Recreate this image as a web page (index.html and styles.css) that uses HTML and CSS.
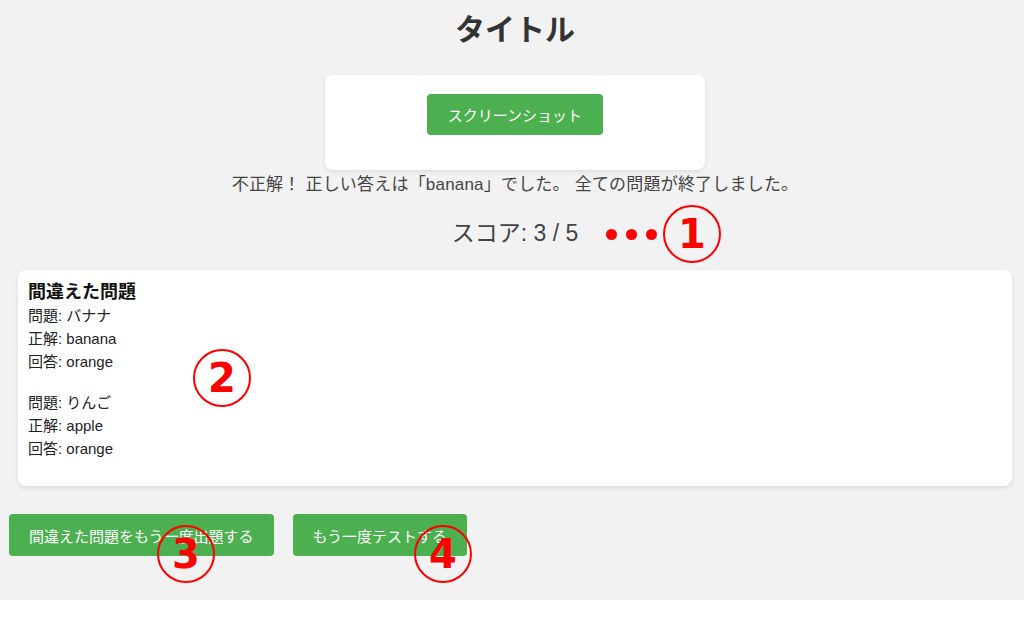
FILE: index.html
```html
<!DOCTYPE html>
<html lang="ja">
<head>
    <meta charset="UTF-8">
    <meta name="viewport" content="width=device-width, initial-scale=1.0">
    <title>タイトル</title>
    <link rel="stylesheet" href="styles.css">
</head>
<body>
    <div class="page">
        <div class="top">
            <h1 class="title">タイトル</h1>

            <div class="shot-card">
                <button class="btn">スクリーンショット</button>
            </div>

            <p class="message">不正解！ 正しい答えは「banana」でした。 全ての問題が終了しました。</p>
            <p class="score">スコア: 3 / 5</p>
        </div>

        <div class="wrong-card">
            <h3 class="wrong-title">間違えた問題</h3>
            <div class="item">
                <div>問題: バナナ</div>
                <div>正解: banana</div>
                <div>回答: orange</div>
            </div>
            <div class="item">
                <div>問題: りんご</div>
                <div>正解: apple</div>
                <div>回答: orange</div>
            </div>
        </div>

        <div class="actions">
            <button class="btn">間違えた問題をもう一度出題する</button>
            <button class="btn">もう一度テストする</button>
        </div>

        <!-- 注釈 -->
        <span class="dot dot1"></span>
        <span class="dot dot2"></span>
        <span class="dot dot3"></span>
        <span class="mark mark1">1</span>
        <span class="mark mark2">2</span>
        <span class="mark mark3">3</span>
        <span class="mark mark4">4</span>
    </div>
</body>
</html>
```

FILE: styles.css
```css
* {
    margin: 0;
    padding: 0;
    box-sizing: border-box;
}

body {
    background-color: #fff;
    font-family: "Liberation Sans", "Noto Sans CJK JP", sans-serif;
    color: #333;
}

.page {
    position: relative;
    height: 600px;
    background-color: #f2f2f2;
    overflow: hidden;
}

.top {
    padding-left: 6px;
}

.title {
    margin-top: 12px;
    font-size: 30px;
    line-height: 36px;
    text-align: center;
    color: #333;
}

.shot-card {
    width: 380px;
    height: 95px;
    margin: 27px auto 0;
    padding-top: 19px;
    background-color: #fff;
    border-radius: 8px;
    box-shadow: 0 2px 4px rgba(0, 0, 0, 0.08);
    text-align: center;
}

.btn {
    height: 42px;
    padding: 0 20px;
    border: none;
    border-radius: 4px;
    background-color: #4caf50;
    color: #fff;
    font-family: inherit;
    font-size: 15px;
}

.shot-card .btn {
    height: 41px;
    padding: 0 21px;
}

.message {
    margin-top: 3px;
    font-size: 17px;
    line-height: 24px;
    letter-spacing: 0.2px;
    text-align: center;
    color: #444;
}

.score {
    margin-top: 21px;
    font-size: 23px;
    line-height: 30px;
    text-align: center;
    color: #444;
}

.wrong-card {
    margin: 22px 12px 0 18px;
    padding: 10px 10px 8px;
    background-color: #fff;
    border-radius: 8px;
    box-shadow: 0 2px 4px rgba(0, 0, 0, 0.1);
    font-size: 15px;
    line-height: 23px;
    color: #222;
}

.wrong-title {
    font-size: 18px;
    line-height: 24px;
    color: #111;
}

.item {
    margin-bottom: 18px;
}

.actions {
    display: flex;
    gap: 19px;
    margin: 28px 0 0 9px;
}

/* 注釈 */
.dot {
    position: absolute;
    top: 229px;
    width: 11px;
    height: 11px;
    border-radius: 50%;
    background-color: #f00;
}
.dot1 { left: 606px; }
.dot2 { left: 626px; }
.dot3 { left: 646px; }

.mark {
    position: absolute;
    width: 58px;
    height: 58px;
    border: 2px solid #f00;
    border-radius: 50%;
    color: #f00;
    font-family: "DejaVu Sans", sans-serif;
    font-weight: bold;
    font-size: 40px;
    line-height: 54px;
    text-align: center;
}
.mark1 { left: 663px; top: 205px; }
.mark2 { left: 193px; top: 349px; }
.mark3 { left: 157px; top: 525px; }
.mark4 { left: 414px; top: 525px; }
```
